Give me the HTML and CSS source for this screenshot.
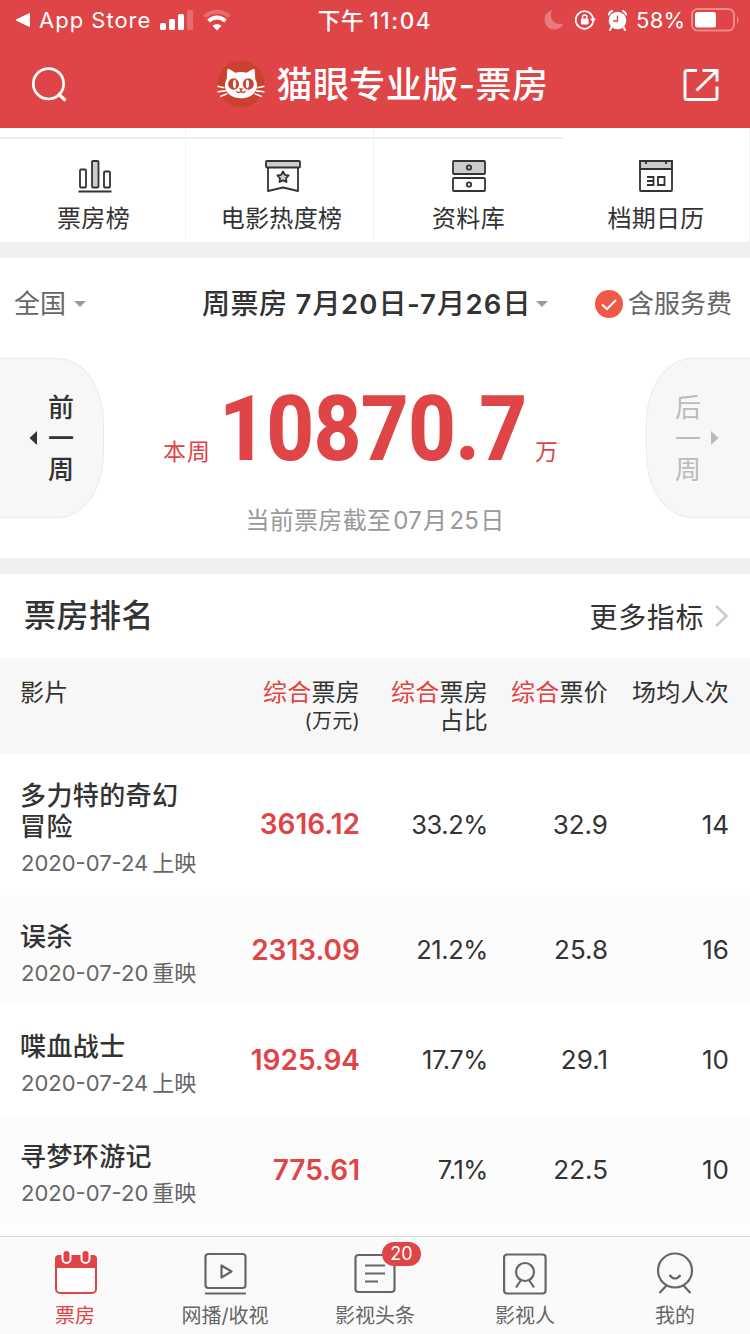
FILE: index.html
```html
<!DOCTYPE html>
<html lang="zh-CN">
<head>
<meta charset="utf-8">
<title>猫眼专业版-票房</title>
<link rel="stylesheet" href="styles.css">
</head>
<body>
<div class="app">
  <header class="header">
    <div class="status">
      <div class="status-left">
        <svg width="16" height="16" viewBox="0 0 16 16"><path d="M1 8 14.500 1.500V14.500Z" fill="#fff" stroke="#fff" stroke-linejoin="round"/></svg>
        <span class="carrier">App Store</span>
        <svg class="signal" width="33" height="20" viewBox="0 0 33 20" fill="#fff"><rect x="0" y="13" width="6" height="7" rx="1.500"/><rect x="9" y="9" width="6" height="11" rx="1.500"/><rect x="18" y="4" width="6" height="16" rx="1.500"/><rect x="27" y="0" width="6" height="20" rx="1.500" opacity=".22"/></svg>
        <svg class="wifi" width="30" height="22" viewBox="0 0 30 22" fill="none" stroke="#fff" stroke-width="4"><path d="M2.500 7.500Q15-2 27.500 7.500" opacity=".22"/><path d="M6.500 12Q15 5 23.500 12"/><path d="M10.500 16.800Q15 13 19.500 16.800L15 21.500Z" fill="#fff" stroke="none"/></svg>
      </div>
      <div class="status-time">下午<b>11:04</b></div>
      <div class="status-right">
        <svg width="20" height="20" viewBox="0 0 20 20"><path d="M8 0.500C4 1 .5 5 .5 9.500c0 6 4.500 10 10 10 4 0 7.500-2.500 9-6C11 16 4 9 8 .5Z" fill="#fff" opacity=".3"/></svg>
        <svg class="lock" width="21" height="20" viewBox="0 0 21 20"><circle cx="9.500" cy="10" r="8.800" fill="none" stroke="#fff" stroke-width="1.800"/><path d="M15 8.500h6l-3 4Z" fill="#fff"/><rect x="6" y="8.500" width="7.500" height="6" rx="1" fill="#fff"/><path d="M7.500 9V7.200a2.200 2.200 0 0 1 4.400 0V9" fill="none" stroke="#fff" stroke-width="1.400"/></svg>
        <svg class="alarm" width="19" height="21" viewBox="0 0 19 21"><circle cx="9.500" cy="10.500" r="8.800" fill="#fff"/><path d="M.8 4.500Q1.500 2 4 1M18.200 4.500Q17.500 2 15 1M3.500 17 2 20M15.500 17 17 20" fill="none" stroke="#fff" stroke-width="2" stroke-linecap="round"/><path d="M9.500 5.500v5.500H5" fill="none" stroke="#df4446" stroke-width="1.400"/></svg>
        <span class="percent">58%</span>
        <svg class="battery" width="49" height="24" viewBox="0 0 49 24"><rect x="1" y="1" width="42" height="21.500" rx="5.500" fill="none" stroke="#fff" stroke-width="2" opacity=".38"/><rect x="4" y="4" width="21" height="15.500" rx="2.500" fill="#fff"/><path d="M46 8.200q3 3.600 0 7.200Z" fill="#fff" opacity=".45"/></svg>
      </div>
    </div>
    <div class="nav">
      <svg width="36" height="36" viewBox="0 0 36 36" fill="none" stroke="#fff" stroke-width="2.700"><circle cx="16.500" cy="16.800" r="15.200"/><path d="m26 26.500 7.500 7" stroke-width="3.200"/></svg>
      <div class="brand">
        <svg width="48" height="50" viewBox="0 0 48 50"><circle cx="24" cy="24" r="23.500" fill="#c9422f"/><g transform="translate(1.900 1) scale(.92)"><path d="M9 10q0-2 2-1.200l7 4q6-1.500 12 0l7-4q2-.8 2 1.200l.5 9.500q2.500 4 2 8.500c-1 8-9 12.500-17.500 12.500S7.500 36 6.500 28q-.5-4.500 2-8.500Z" fill="#fff"/><path d="M6 29-1.500 27.500M7.500 32.500-1.500 33.500M9 35.500 1.500 38.500M42 29l7.500-1.500M40.500 32.500l9 1M39 35.500l7.500 3" stroke="#fff" stroke-width="1.700"/><ellipse cx="16" cy="25" rx="6" ry="6.300" fill="#c9422f"/><ellipse cx="32" cy="25" rx="6" ry="6.300" fill="#c9422f"/><ellipse cx="17" cy="25" rx="1.700" ry="4.500" fill="#fff"/><ellipse cx="31" cy="25" rx="1.700" ry="4.500" fill="#fff"/><path d="M21.500 30q2.500-1 5 0L24 32.500Z" fill="#c9422f"/><path d="M19 33q3 3 5-.5 2 3.500 5 .5" fill="none" stroke="#c9422f" stroke-width="1.500"/></g></svg>
        <h1>猫眼专业版-票房</h1>
      </div>
      <svg width="36" height="34" viewBox="0 0 36 34" fill="none" stroke="#fff" stroke-width="3"><path d="M14 2.500H4Q2 2.500 2 4.500V29.500Q2 31.500 4 31.500H32Q34 31.500 34 29.500V18.500M19.500 2.500H34V13.500M33.500 3 13.500 22.500"/></svg>
    </div>
  </header>

  <nav class="shortcuts">
    <a class="shortcut"><svg width="34" height="34" viewBox="0 0 34 34" fill="none" stroke="#333" stroke-width="1.800"><rect x="2" y="10.500" width="6" height="18" rx="1"/><rect x="14" y="2" width="6.500" height="26.500" rx="1" fill="#ccc"/><rect x="26" y="12.500" width="6" height="16" rx="1"/><path d="M.5 32.500h33"/></svg><span>票房榜</span></a>
    <a class="shortcut"><svg width="36" height="34" viewBox="0 0 36 34" fill="none" stroke="#333" stroke-width="1.800" stroke-linejoin="round"><path d="M3 8v24l15-3.500L33 32V8"/><rect x="1" y="2" width="34" height="6.500" rx="1" fill="#ccc"/><path d="m18 12.500 1.800 3.300 3.800.7-2.600 2.800.5 3.700-3.500-1.600-3.500 1.600.5-3.700-2.600-2.800 3.800-.7Z" fill="#ccc"/></svg><span>电影热度榜</span></a>
    <a class="shortcut"><svg width="34" height="34" viewBox="0 0 34 34" fill="none" stroke="#333" stroke-width="1.800"><rect x="1" y="2" width="32" height="13" rx="1" fill="#ccc"/><rect x="1" y="19" width="32" height="13" rx="1"/><circle cx="17" cy="8.500" r="2.200"/><circle cx="17" cy="25.500" r="2.200"/></svg><span>资料库</span></a>
    <a class="shortcut"><svg width="34" height="34" viewBox="0 0 34 34" fill="none" stroke="#333" stroke-width="1.800"><path d="M1 2h32v8H1Z" fill="#ccc"/><rect x="1" y="2" width="32" height="30" rx="1"/><path d="M1 10h32M7 2v3M27 2v3M8 18h6.500v8H8M8 22h6.500M19 18h6.500v8H19Z"/></svg><span>档期日历</span></a>
  </nav>

  <section class="summary">
    <div class="filters">
      <div class="region">全国<i class="caret"></i></div>
      <div class="period"><span>周票房 <b>7</b>月<b>20</b>日<b>-7</b>月<b>26</b>日</span><i class="caret"></i></div>
      <div class="fee"><svg width="28" height="28" viewBox="0 0 28 28"><circle cx="14" cy="14" r="14" fill="#f15848"/><path d="m7 14.500 5 4.500 9-9" fill="none" stroke="#fff" stroke-width="2"/></svg>含服务费</div>
    </div>
    <div class="total-row">
      <div class="week prev"><svg width="8" height="16" viewBox="0 0 8 16"><path d="M8 1v14L.5 8Z" fill="#333"/></svg><span>前一周</span></div>
      <div class="total"><span class="unit">本周</span><strong>10870.7</strong><span class="unit">万</span></div>
      <div class="week next"><span>后一周</span><svg width="8" height="16" viewBox="0 0 8 16"><path d="M0 1v14L7.500 8Z" fill="#bbb"/></svg></div>
    </div>
    <p class="cutoff">当前票房截至<span>07</span>月<span>25</span>日</p>
  </section>

  <section class="ranking">
    <div class="ranking-head"><h2>票房排名</h2><a>更多指标<svg width="15" height="24" viewBox="0 0 15 24"><path d="m2 2 10.500 10L2 22" fill="none" stroke="#ccc" stroke-width="2.600"/></svg></a></div>
    <div class="row thead"><div>影片</div><div><em>综合</em>票房<small>(万元)</small></div><div><em>综合</em>票房<br>占比</div><div><em>综合</em>票价</div><div>场均人次</div></div>
    <div class="row film tall"><div><h3>多力特的奇幻<br>冒险</h3><p>2020-07-24<span>上映</span></p></div><div class="gross">3616.12</div><div class="share">33.2%</div><div>32.9</div><div>14</div></div>
    <div class="row film alt"><div><h3>误杀</h3><p>2020-07-20<span>重映</span></p></div><div class="gross">2313.09</div><div class="share">21.2%</div><div>25.8</div><div>16</div></div>
    <div class="row film"><div><h3>喋血战士</h3><p>2020-07-24<span>上映</span></p></div><div class="gross">1925.94</div><div class="share">17.7%</div><div>29.1</div><div>10</div></div>
    <div class="row film alt"><div><h3>寻梦环游记</h3><p>2020-07-20<span>重映</span></p></div><div class="gross">775.61</div><div class="share">7.1%</div><div>22.5</div><div>10</div></div>
  </section>

  <footer class="tabs">
    <a class="tab active"><svg width="44" height="46" viewBox="0 0 44 46"><rect x="2" y="6" width="40" height="37" rx="4" fill="#fff" stroke="#df4446" stroke-width="2"/><path d="M1 18V9q0-4 4-4h34q4 0 4 4v9Z" fill="#df4446"/><g fill="#df4446" stroke="#fafafa" stroke-width="4" paint-order="stroke"><rect x="9.500" y="1" width="6" height="11" rx="3"/><rect x="28.500" y="1" width="6" height="11" rx="3"/></g></svg><span>票房</span></a>
    <a class="tab"><svg width="44" height="46" viewBox="0 0 44 46" fill="none" stroke="#666" stroke-width="2.200" stroke-linejoin="round"><rect x="2.500" y="4" width="40" height="34" rx="3"/><path d="M2 43.500h41M18.500 15.500v12l10-6Z"/></svg><span>网播/收视</span></a>
    <a class="tab"><svg width="44" height="46" viewBox="0 0 44 46" fill="none" stroke="#666" stroke-width="2.200"><rect x="2.500" y="5" width="39" height="37" rx="3"/><path d="M12 15.500h20M12 23.500h20M12 31.500h13"/></svg><b class="badge">20</b><span>影视头条</span></a>
    <a class="tab"><svg width="44" height="46" viewBox="0 0 44 46" fill="none" stroke="#666" stroke-width="2.200"><rect x="1.100" y="4.500" width="41.500" height="39" rx="3"/><circle cx="22" cy="22" r="9"/><path d="m18 30-5 7.500M26 30l5 7.500"/></svg><span>影视人</span></a>
    <a class="tab"><svg width="44" height="46" viewBox="0 0 44 46" fill="none" stroke="#666" stroke-width="2.200"><circle cx="22" cy="20.500" r="17"/><path d="m14 35-7.500 8M30 35l7.500 8M16.500 25q5.500 7 11 0"/></svg><span>我的</span></a>
  </footer>
</div>
</body>
</html>
```
FILE: styles.css
```css
* { box-sizing: border-box; }
body { margin: 0; background: #fff; color: #333; font-family: Inter, "Noto Sans CJK SC", sans-serif; }
h1, h2, h3, p { margin: 0; font-weight: 500; }
svg { display: block; flex: none; }
.app { width: 750px; height: 1334px; display: flex; flex-direction: column; overflow: hidden; }

.header { height: 128px; background: #df4446; color: #fff; }
.status { height: 40px; display: grid; grid-template-columns: 250px 250px 250px; align-items: center; font-size: 22px; }
.status-left, .status-right { display: flex; align-items: center; }
.status-left { padding-left: 15px; }
.carrier { margin-left: 8px; letter-spacing: 1px; width: 121px; white-space: nowrap; }
.wifi { margin-left: 9px; }
.status-time { text-align: center; font-size: 22.5px; line-height: 32px; letter-spacing: .8px; font-weight: 500; padding-top: 1px; }
.status-time b { font-weight: 500; letter-spacing: 1.6px; margin-left: 5px; }
.status-right { padding-left: 44px; }
.lock { margin-left: 11px; }
.alarm { margin-left: 12px; }
.percent { margin-left: 9px; width: 55px; letter-spacing: .3px; }
.nav { height: 88px; display: flex; align-items: center; justify-content: space-between; padding: 1px 31px 0 32px; }
.brand { display: flex; align-items: center; gap: 12px; padding-left: 14px; }
.brand h1 { font-size: 36px; line-height: 50px; letter-spacing: .4px; }

.shortcuts { height: 130px; display: grid; grid-template-columns: 186px 188px 189px 187px; border-bottom: 16px solid #f0f0f0; background: linear-gradient(#eee, #eee) 0 9px / 563px 2px no-repeat; }
.shortcut { padding-top: 31px; display: flex; flex-direction: column; align-items: center; border-right: 1px solid #f2f2f2; }
.shortcut:nth-child(1) { padding-left: 2px; }
.shortcut:nth-child(2) { padding-left: 4px; }
.shortcut:nth-child(3) { border-right: 0; }
.shortcut:nth-child(-n+2) svg { margin-left: 2px; }
.shortcut span { font-size: 24px; line-height: 34px; margin-top: 9px; letter-spacing: .3px; }

.summary { height: 316px; border-bottom: 16px solid #f0f0f0; }
.filters { height: 92px; display: grid; grid-template-columns: 187px 408px 155px; align-items: center; font-size: 26px; line-height: 36px; color: #666; }
.filters > div { display: flex; align-items: center; white-space: nowrap; }
.filters svg, .filters .caret { position: relative; top: 0; }
.caret { border: 6px solid transparent; border-top-color: #999; border-bottom: 0; margin-left: 8px; }
.region { padding-left: 14px; }
.period { padding-left: 15px; color: #333; font-weight: 500; font-size: 28px; letter-spacing: .5px; }
.period b { font-weight: 600; font-size: 27.5px; letter-spacing: 1.1px; }
.period .caret { margin-left: 5px; }
.fee svg { margin-right: 5px; }
.total-row { height: 176px; display: grid; grid-template-columns: 104px 1fr 104px; padding-top: 8px; }
.week { height: 160px; background: #f7f7f7; border: 1px solid #ebebeb; display: flex; align-items: center; }
.prev { border-left: 0; border-radius: 0 46px 46px 0 / 0 64px 64px 0; padding-left: 29px; gap: 11px; }
.next { border-right: 0; border-radius: 46px 0 0 46px / 64px 0 0 64px; padding-left: 28px; gap: 9px; color: #bbb; }
.week span { width: 27px; font-size: 26px; line-height: 31px; font-weight: 500; word-break: break-all; }
.next span { font-weight: 400; }
.total { display: flex; align-items: baseline; padding: 12px 0 0 59px; color: #df4446; }
.total .unit { font-size: 23px; letter-spacing: 1px; width: 56px; }
.total strong { font: 800 90px/120px Roboto, sans-serif; width: 316px; transform: scaleX(.925); transform-origin: left; letter-spacing: -.8px; }
.cutoff { text-align: center; font-size: 24px; line-height: 34px; color: #999; font-weight: 400; letter-spacing: .3px; margin-top: -22px; }
.cutoff span { margin: 0 1px 0 2px; }

.ranking { flex: 1; }
.ranking-head { height: 84px; padding: 0 21px 0 24px; display: flex; align-items: center; justify-content: space-between; }
.ranking-head h2 { font-size: 32px; line-height: 46px; letter-spacing: .5px; }
.ranking-head a { display: flex; align-items: center; gap: 10px; font-size: 28px; letter-spacing: .6px; }
.row { height: 110px; display: grid; grid-template-columns: 199px 141px 128px 120px 121px; padding-left: 20px; align-items: center; }
.row > div { text-align: right; white-space: nowrap; }
.row > div:first-child { text-align: left; }
.thead { height: 96px; background: #f7f7f7; align-items: start; padding-top: 21px; font-size: 24px; line-height: 28px; letter-spacing: .25px; }
.thead em { color: #df4446; font-style: normal; }
.thead small { display: block; font-size: 20px; }
.film { font-size: 26px; }
.film > div { padding-bottom: 1px; }
.film > div:first-child { padding: 8px 0 0; }
.film.tall { height: 141px; }
.film .share { font-size: 25.5px; letter-spacing: -.4px; }
.alt { background: #fcfcfc; }
.film h3 { font-size: 26px; line-height: 31px; letter-spacing: .4px; }
.film p { font-size: 22px; line-height: 30px; margin-top: 6px; padding-left: 1px; color: #666; font-weight: 400; }
.film p span { margin-left: 4px; }
.film .gross { color: #df4446; font-weight: 600; font-size: 28px; }

.tabs { height: 98px; background: #fafafa; border-top: 1px solid #ddd; display: grid; grid-template-columns: repeat(5, 1fr); color: #666; }
.tab { position: relative; display: flex; flex-direction: column; align-items: center; padding-top: 13px; }
.tab span { font-size: 20px; line-height: 28px; margin-top: 6px; }
.tab.active { color: #df4446; }
.tab.active svg { margin-left: 2px; }
.badge { position: absolute; left: 82px; top: 5px; width: 39px; height: 24px; border-radius: 12px; background: #df4446; color: #fff; font-weight: 400; font-size: 18px; line-height: 24px; text-align: center; }
```
